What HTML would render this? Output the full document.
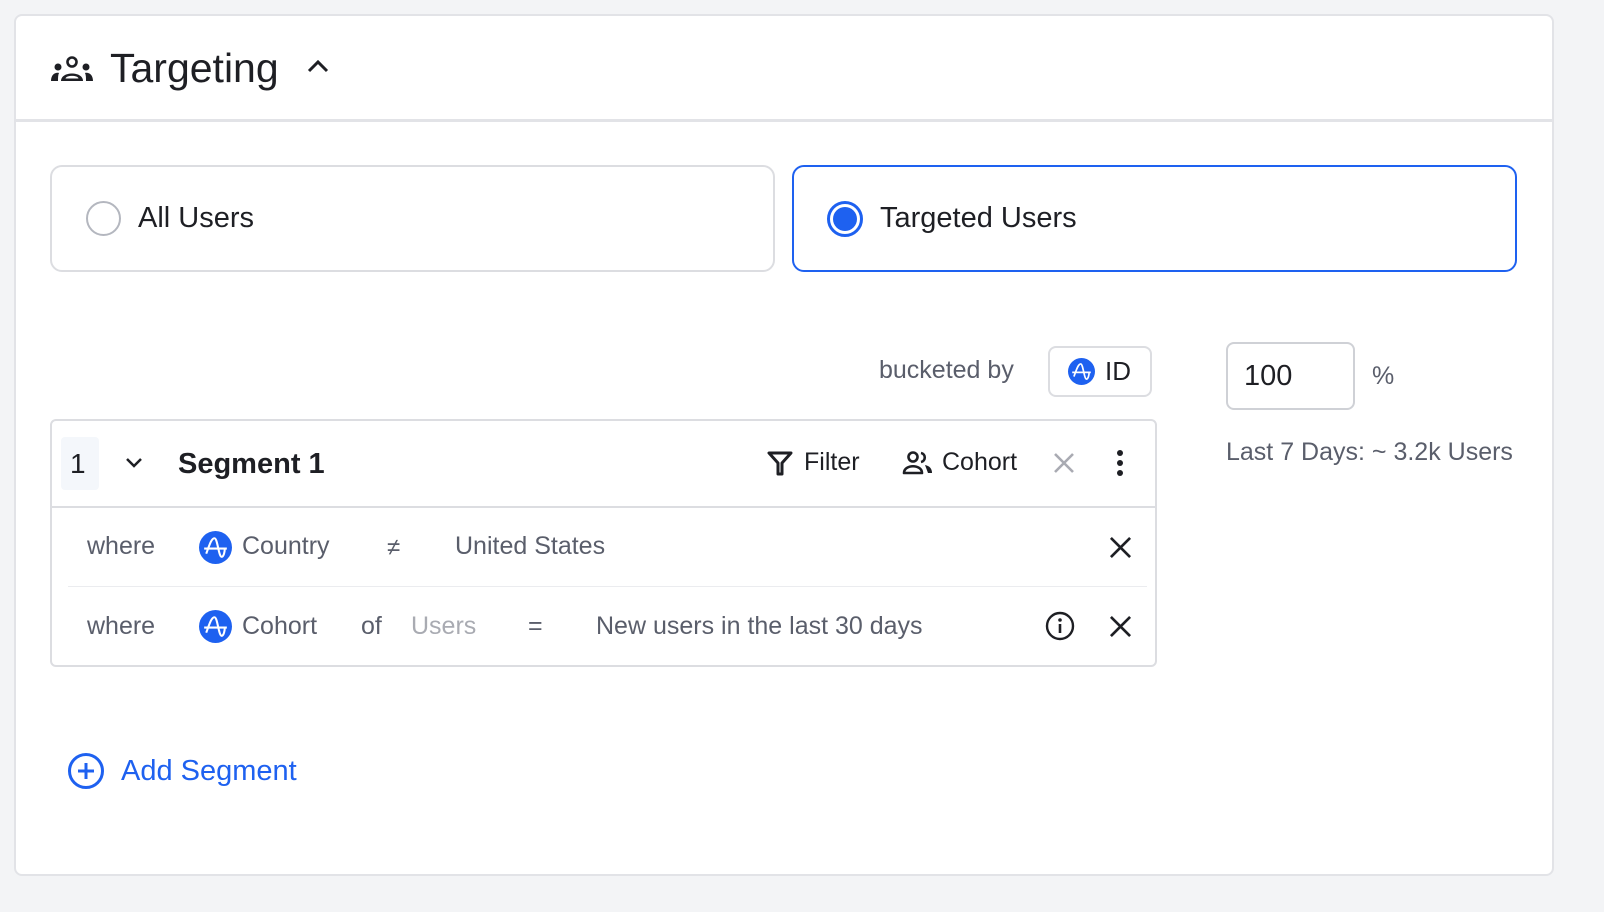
<!DOCTYPE html>
<html><head><meta charset="utf-8"><style>
*{box-sizing:border-box;margin:0;padding:0}
body{width:1604px;height:912px;background:#f3f4f6;font-family:"Liberation Sans",sans-serif;position:relative;overflow:hidden;color:#1e1f24}
.a{position:absolute}
.card{left:14px;top:14px;width:1540px;height:862px;background:#fff;border:2px solid #e2e3e7;border-radius:8px}
.t{white-space:nowrap;line-height:1}
.g{color:#5a5e6b}
</style></head><body>
<div class="a card"></div>
<div class="a" style="left:16px;top:119px;width:1536px;height:3px;background:#e2e3e7"></div>
<svg class="a" style="left:50px;top:56px" width="44" height="26" viewBox="0 0 44 26">
<circle cx="22" cy="6" r="4.5" fill="none" stroke="#1e1f24" stroke-width="2.6"/>
<path d="M11 25 C11 15 33 15 33 25 Z" fill="#1e1f24"/>
<path d="M15.5 22.5 C16 19 28 19 28.5 22.5Z" fill="#fff"/>
<circle cx="8" cy="11" r="3.5" fill="#1e1f24"/><circle cx="36" cy="11" r="3.5" fill="#1e1f24"/>
<path d="M1 25 C1 18 6 16 9 17 C8 19 8 22 8 25Z" fill="#1e1f24"/>
<path d="M43 25 C43 18 38 16 35 17 C36 19 36 22 36 25Z" fill="#1e1f24"/>
</svg>
<div class="a t" style="left:110px;top:48px;font-size:41px;color:#1e1f24">Targeting</div>
<svg class="a" style="left:306px;top:58px" width="24" height="16" viewBox="0 0 24 16"><path d="M3 13 L12 4 L21 13" fill="none" stroke="#1e1f24" stroke-width="3"/></svg>
<div class="a" style="left:50px;top:165px;width:725px;height:107px;border:2px solid #dcdde1;border-radius:12px"></div>
<div class="a" style="left:86px;top:201px;width:35px;height:35px;border:2.5px solid #b4b7bf;border-radius:50%"></div>
<div class="a t" style="left:138px;top:204px;font-size:29px">All Users</div>
<div class="a" style="left:792px;top:165px;width:725px;height:107px;border:2px solid #1e61f0;border-radius:12px"></div>
<div class="a" style="left:827px;top:201px;width:36px;height:36px;border:3px solid #1e61f0;border-radius:50%"></div>
<div class="a" style="left:833px;top:207px;width:24px;height:24px;background:#1e61f0;border-radius:50%"></div>
<div class="a t" style="left:880px;top:204px;font-size:29px">Targeted Users</div>
<div class="a t g" style="left:879px;top:358px;font-size:25px">bucketed by</div>
<div class="a" style="left:1048px;top:346px;width:104px;height:51px;border:2px solid #dcdde1;border-radius:8px"></div>
<svg class="a" style="left:1068px;top:358px" width="27" height="27" viewBox="0 0 32 32"><circle cx="16" cy="16" r="16" fill="#1e61f0"/><path d="M5 17H27M7 22 C10 14 12 7 15 7 C18 7 19 25 22 25 C24 25 25 20 25 17" fill="none" stroke="#fff" stroke-width="2"/></svg>
<div class="a t" style="left:1105px;top:358px;font-size:26px">ID</div>
<div class="a" style="left:1226px;top:342px;width:129px;height:68px;border:2px solid #cfd1d6;border-radius:8px"></div>
<div class="a t" style="left:1244px;top:362px;font-size:29px">100</div>
<div class="a t g" style="left:1372px;top:364px;font-size:25px">%</div>
<div class="a t g" style="left:1226px;top:440px;font-size:25px">Last 7 Days: ~ 3.2k Users</div>
<div class="a" style="left:50px;top:419px;width:1107px;height:248px;border:2px solid #dcdde1;border-radius:6px"></div>
<div class="a" style="left:52px;top:506px;width:1103px;height:2px;background:#dcdde1"></div>
<div class="a" style="left:68px;top:586px;width:1079px;height:1px;background:#ebecef"></div>
<div class="a" style="left:61px;top:437px;width:38px;height:53px;background:#f4f7fb;border-radius:4px"></div>
<div class="a t" style="left:70px;top:450px;font-size:28px">1</div>
<svg class="a" style="left:124px;top:456px" width="20" height="14" viewBox="0 0 20 14"><path d="M3 3 L10 10 L17 3" fill="none" stroke="#1e1f24" stroke-width="2.5"/></svg>
<div class="a t" style="left:178px;top:450px;font-size:29px;font-weight:bold">Segment 1</div>
<svg class="a" style="left:767px;top:450px" width="26" height="26" viewBox="0 0 26 26"><path d="M2 3 H24 L15 13 V24 H11 V13 Z" fill="none" stroke="#1e1f24" stroke-width="3" stroke-linejoin="round"/></svg>
<div class="a t" style="left:804px;top:450px;font-size:25px">Filter</div>
<svg class="a" style="left:902px;top:451px" width="32" height="24" viewBox="0 0 32 24"><circle cx="11" cy="6" r="4.5" fill="none" stroke="#1e1f24" stroke-width="2.6"/><path d="M2 22 C2 13 20 13 20 22 Z" fill="none" stroke="#1e1f24" stroke-width="2.6" stroke-linejoin="round"/><path d="M19 2 C24 3 24 10 19 11" fill="none" stroke="#1e1f24" stroke-width="2.6"/><path d="M23 14 C28 15 30 18 30 22 H26Z" fill="#1e1f24"/></svg>
<div class="a t" style="left:942px;top:450px;font-size:25px">Cohort</div>
<svg class="a" style="left:1052px;top:451px" width="24" height="24" viewBox="0 0 24 24"><path d="M3 3L21 21M21 3L3 21" stroke="#a9abb2" stroke-width="2.6"/></svg>
<svg class="a" style="left:1114px;top:449px" width="12" height="28" viewBox="0 0 12 28"><circle cx="6" cy="4" r="3" fill="#1e1f24"/><circle cx="6" cy="14" r="3" fill="#1e1f24"/><circle cx="6" cy="24" r="3" fill="#1e1f24"/></svg>
<div class="a t g" style="left:87px;top:534px;font-size:25px">where</div>
<svg class="a" style="left:199px;top:531px" width="33" height="33" viewBox="0 0 32 32"><circle cx="16" cy="16" r="16" fill="#1e61f0"/><path d="M5 17H27M7 22 C10 14 12 7 15 7 C18 7 19 25 22 25 C24 25 25 20 25 17" fill="none" stroke="#fff" stroke-width="2"/></svg>
<div class="a t g" style="left:242px;top:534px;font-size:25px">Country</div>
<div class="a t g" style="left:387px;top:536px;font-size:24px">≠</div>
<div class="a t g" style="left:455px;top:534px;font-size:25px">United States</div>
<svg class="a" style="left:1109px;top:536px" width="23" height="23" viewBox="0 0 24 24"><path d="M2 2L22 22M22 2L2 22" stroke="#1e1f24" stroke-width="2.8"/></svg>
<div class="a t g" style="left:87px;top:614px;font-size:25px">where</div>
<svg class="a" style="left:199px;top:610px" width="33" height="33" viewBox="0 0 32 32"><circle cx="16" cy="16" r="16" fill="#1e61f0"/><path d="M5 17H27M7 22 C10 14 12 7 15 7 C18 7 19 25 22 25 C24 25 25 20 25 17" fill="none" stroke="#fff" stroke-width="2"/></svg>
<div class="a t g" style="left:242px;top:614px;font-size:25px">Cohort</div>
<div class="a t g" style="left:361px;top:614px;font-size:25px">of</div>
<div class="a t" style="left:411px;top:614px;font-size:25px;color:#a9abb2">Users</div>
<div class="a t g" style="left:528px;top:614px;font-size:25px">=</div>
<div class="a t g" style="left:596px;top:614px;font-size:25px">New users in the last 30 days</div>
<svg class="a" style="left:1045px;top:611px" width="30" height="30" viewBox="0 0 30 30"><circle cx="15" cy="15" r="13" fill="none" stroke="#1e1f24" stroke-width="2.4"/><circle cx="15" cy="9" r="1.8" fill="#1e1f24"/><path d="M15 13V22" stroke="#1e1f24" stroke-width="2.6"/></svg>
<svg class="a" style="left:1109px;top:615px" width="23" height="23" viewBox="0 0 24 24"><path d="M2 2L22 22M22 2L2 22" stroke="#1e1f24" stroke-width="2.8"/></svg>
<svg class="a" style="left:67px;top:752px" width="38" height="38" viewBox="0 0 38 38"><circle cx="19" cy="19" r="16.5" fill="none" stroke="#1e61f0" stroke-width="3"/><path d="M19 11V27M11 19H27" stroke="#1e61f0" stroke-width="3"/></svg>
<div class="a t" style="left:121px;top:757px;font-size:29px;color:#1e61f0">Add Segment</div>
</body></html>
